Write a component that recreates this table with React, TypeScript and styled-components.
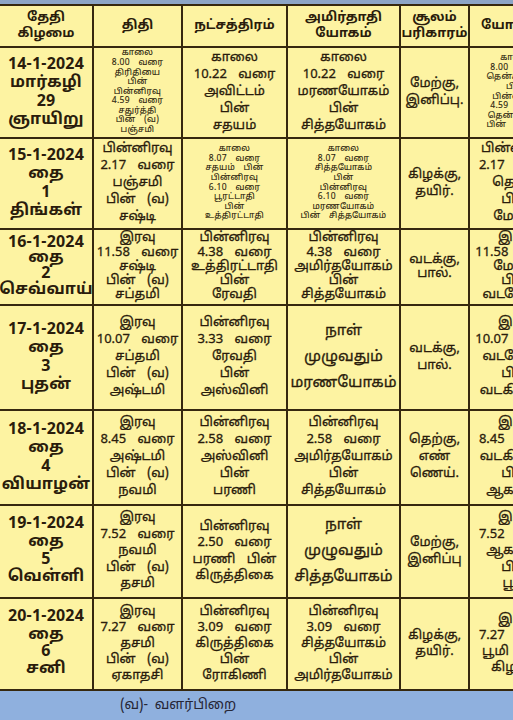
import styled, { createGlobalStyle } from "styled-components";

const GlobalStyle = createGlobalStyle`
  html, body {
    margin: 0;
    padding: 0;
    background: #8fb0de;
  }
  body {
    font-family: "Noto Sans Tamil", "Lohit Tamil", "Noto Sans", "DejaVu Sans", sans-serif;
    color: #2a1c0c;
  }
`;

type Size = "sm" | "md" | "lg";

type CellData = {
  lines: string[];
  size?: Size;
};

type RowData = {
  height: number;
  lh: number;
  cells: CellData[];
};

const COLUMNS = [92, 87, 103, 111, 67, 92];

const headers = [
  ["தேதி", "கிழமை"],
  ["திதி"],
  ["நட்சத்திரம்"],
  ["அமிர்தாதி", "யோகம்"],
  ["சூலம்", "பரிகாரம்"],
  ["யோகினி"],
];

const rows: RowData[] = [
  {
    height: 89,
    lh: 17,
    cells: [
      { lines: ["14-1-2024", "மார்கழி", "29", "ஞாயிறு"] },
      {
        size: "sm",
        lines: ["காலை", "8.00 வரை", "திரிதியை", "பின்", "பின்னிரவு", "4.59 வரை", "சதுர்த்தி", "பின் (வ)", "பஞ்சமி"],
      },
      { lines: ["காலை", "10.22 வரை", "அவிட்டம்", "பின்", "சதயம்"] },
      { lines: ["காலை", "10.22 வரை", "மரணயோகம்", "பின்", "சித்தயோகம்"] },
      { lines: ["மேற்கு,", "இனிப்பு."] },
      {
        size: "sm",
        lines: ["காலை", "8.00 வரை", "தென்கிழக்கு", "பின்", "பின்னிரவு", "4.59 வரை", "தென்மேற்கு", "பின் மேற்கு"],
      },
    ],
  },
  {
    height: 89,
    lh: 17,
    cells: [
      { lines: ["15-1-2024", "தை", "1", "திங்கள்"] },
      { lines: ["பின்னிரவு", "2.17 வரை", "பஞ்சமி", "பின் (வ)", "சஷ்டி"] },
      {
        size: "sm",
        lines: ["காலை", "8.07 வரை", "சதயம் பின்", "பின்னிரவு", "6.10 வரை", "பூரட்டாதி", "பின்", "உத்திரட்டாதி"],
      },
      {
        size: "sm",
        lines: ["காலை", "8.07 வரை", "சித்தயோகம்", "பின்", "பின்னிரவு", "6.10 வரை", "மரணயோகம்", "பின் சித்தயோகம்"],
      },
      { lines: ["கிழக்கு,", "தயிர்."] },
      { lines: ["பின்னிரவு", "2.17 வரை", "தெற்கு", "பின்", "மேற்கு"] },
    ],
  },
  {
    height: 74,
    lh: 14.3,
    cells: [
      { lines: ["16-1-2024", "தை", "2", "செவ்வாய்"] },
      { lines: ["இரவு", "11.58 வரை", "சஷ்டி", "பின் (வ)", "சப்தமி"] },
      { lines: ["பின்னிரவு", "4.38 வரை", "உத்திரட்டாதி", "பின்", "ரேவதி"] },
      { lines: ["பின்னிரவு", "4.38 வரை", "அமிர்தயோகம்", "பின்", "சித்தயோகம்"] },
      { lines: ["வடக்கு,", "பால்."] },
      { lines: ["இரவு", "11.58 வரை", "மேற்கு", "பின்", "வடமேற்கு"] },
    ],
  },
  {
    height: 103,
    lh: 17,
    cells: [
      { lines: ["17-1-2024", "தை", "3", "புதன்"] },
      { lines: ["இரவு", "10.07 வரை", "சப்தமி", "பின் (வ)", "அஷ்டமி"] },
      { lines: ["பின்னிரவு", "3.33 வரை", "ரேவதி", "பின்", "அஸ்வினி"] },
      { size: "lg", lines: ["நாள்", "முழுவதும்", "மரணயோகம்"] },
      { lines: ["வடக்கு,", "பால்."] },
      { lines: ["இரவு", "10.07 வரை", "வடமேற்கு", "பின்", "வடகிழக்கு"] },
    ],
  },
  {
    height: 93,
    lh: 17,
    cells: [
      { lines: ["18-1-2024", "தை", "4", "வியாழன்"] },
      { lines: ["இரவு", "8.45 வரை", "அஷ்டமி", "பின் (வ)", "நவமி"] },
      { lines: ["பின்னிரவு", "2.58 வரை", "அஸ்வினி", "பின்", "பரணி"] },
      { lines: ["பின்னிரவு", "2.58 வரை", "அமிர்தயோகம்", "பின்", "சித்தயோகம்"] },
      { lines: ["தெற்கு,", "எண்", "ணெய்."] },
      { lines: ["இரவு", "8.45 வரை", "வடகிழக்கு", "பின்", "ஆகாயம்"] },
    ],
  },
  {
    height: 91,
    lh: 16.5,
    cells: [
      { lines: ["19-1-2024", "தை", "5", "வெள்ளி"] },
      { lines: ["இரவு", "7.52 வரை", "நவமி", "பின் (வ)", "தசமி"] },
      { lines: ["பின்னிரவு", "2.50 வரை", "பரணி பின்", "கிருத்திகை"] },
      { size: "lg", lines: ["நாள்", "முழுவதும்", "சித்தயோகம்"] },
      { lines: ["மேற்கு,", "இனிப்பு"] },
      { lines: ["இரவு", "7.52 வரை", "ஆகாயம்", "பின்", "பூமி"] },
    ],
  },
  {
    height: 90,
    lh: 16,
    cells: [
      { lines: ["20-1-2024", "தை", "6", "சனி"] },
      { lines: ["இரவு", "7.27 வரை", "தசமி", "பின் (வ)", "ஏகாதசி"] },
      { lines: ["பின்னிரவு", "3.09 வரை", "கிருத்திகை", "பின்", "ரோகிணி"] },
      { lines: ["பின்னிரவு", "3.09 வரை", "சித்தயோகம்", "பின்", "அமிர்தயோகம்"] },
      { lines: ["கிழக்கு,", "தயிர்."] },
      { lines: ["இரவு", "7.27 வரை", "பூமி பின்", "கிழக்கு"] },
    ],
  },
];

const Page = styled.div`
  width: 513px;
  height: 720px;
  overflow: hidden;
  display: flex;
  flex-direction: column;
  background: #8fb0de;
`;

const TopStrip = styled.div`
  height: 4px;
  flex: none;
  background: #8da5c6;
`;

const Table = styled.div<{ $rows: string }>`
  flex: none;
  display: grid;
  width: max-content;
  grid-template-columns: ${COLUMNS.map((c) => `${c}px`).join(" ")};
  grid-template-rows: ${(p) => p.$rows};
  gap: 2px;
  background: #36280f;
  border-top: 2px solid #36280f;
  border-bottom: 2px solid #36280f;
`;

const Cell = styled.div`
  background: #fdf3a2;
  display: flex;
  flex-direction: column;
  align-items: center;
  justify-content: center;
  text-align: center;
  overflow: hidden;
  white-space: nowrap;
`;

const HeadText = styled.div`
  font-size: 13px;
  line-height: 16px;
  font-weight: 700;
`;

const DateText = styled.div<{ $lh: number }>`
  font-size: 16px;
  line-height: ${(p) => p.$lh + 1.3}px;
  font-weight: 700;
  letter-spacing: 0.2px;
`;

const Line = styled.div<{ $size: Size; $lh: number }>`
  font-size: ${(p) => (p.$size === "sm" ? "8.5px" : p.$size === "lg" ? "15px" : "13px")};
  line-height: ${(p) => (p.$size === "sm" ? "9.6px" : p.$size === "lg" ? "26px" : `${p.$lh}px`)};
  letter-spacing: ${(p) => (p.$size === "sm" ? "0.3px" : "0")};
  word-spacing: ${(p) => (p.$size === "sm" ? "6px" : "8px")};
  -webkit-text-stroke: ${(p) => (p.$size === "sm" ? "0.1px" : "0.3px")} currentColor;
`;

const Footer = styled.div`
  flex: 1;
  display: flex;
  align-items: center;
  padding-left: 120px;
  font-size: 14px;
  word-spacing: 3px;
  color: #262636;
`;

function App() {
  const template = ["40px", ...rows.map((r) => `${r.height}px`)].join(" ");

  return (
    <>
      <GlobalStyle />
      <Page>
        <TopStrip />
        <Table $rows={template}>
          {headers.map((h, i) => (
            <Cell key={`h${i}`}>
              {h.map((t) => (
                <HeadText key={t}>{t}</HeadText>
              ))}
            </Cell>
          ))}
          {rows.map((row, r) =>
            row.cells.map((cell, c) => (
              <Cell key={`${r}-${c}`}>
                {c === 0
                  ? cell.lines.map((t) => (
                      <DateText key={t} $lh={row.lh}>
                        {t}
                      </DateText>
                    ))
                  : cell.lines.map((t, k) => (
                      <Line key={k} $size={cell.size ?? "md"} $lh={row.lh}>
                        {t}
                      </Line>
                    ))}
              </Cell>
            ))
          )}
        </Table>
        <Footer>(வ)- வளர்பிறை</Footer>
      </Page>
    </>
  );
}

export default App;
